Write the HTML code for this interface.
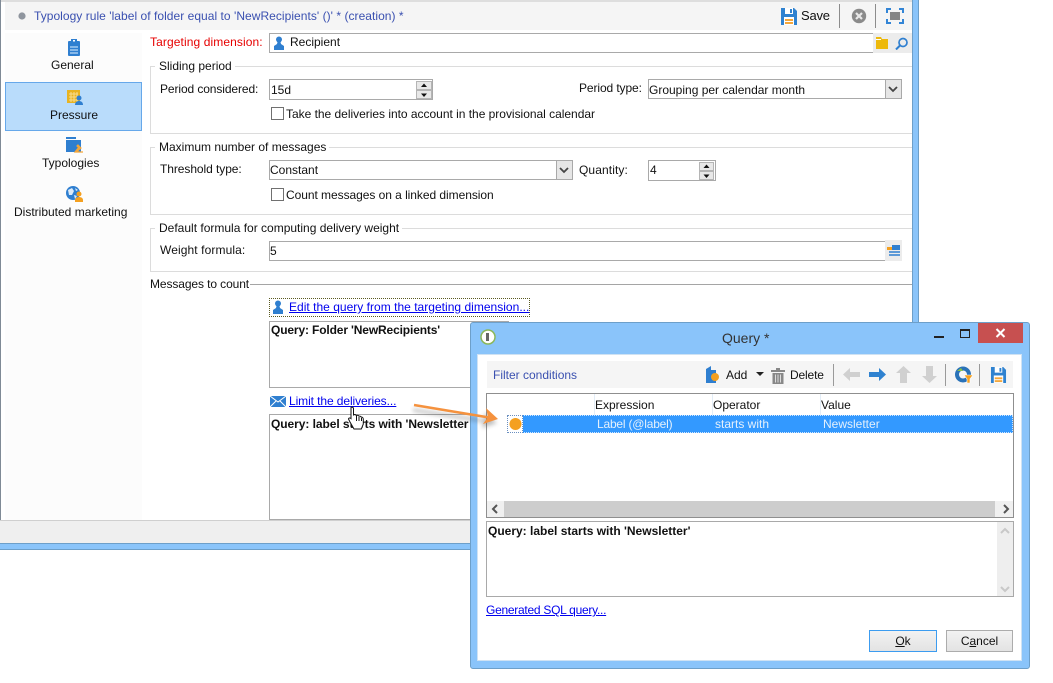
<!DOCTYPE html>
<html><head><meta charset="utf-8"><style>
html,body{margin:0;padding:0;background:#fff}
#p{position:relative;width:1053px;height:683px;overflow:hidden;background:#fff;font:12px "Liberation Sans",sans-serif;color:#111}
#p div,#p span.t,#p svg,#p a{position:absolute}
.t{white-space:nowrap;line-height:14px}
.b{border:1px solid #a9a9a9;background:#fff;box-sizing:border-box}
.fs{border:1px solid #dcdcdc;border-right:0;box-sizing:border-box}
.lg{background:#fff;padding:0 3px 0 4px;line-height:14px;white-space:nowrap}
.spin{background:#e8e8e8;border:1px solid #b5b5b5;box-sizing:border-box}
.cb{width:13px;height:13px;border:1px solid #707070;background:#fff;box-sizing:border-box}
a{color:#0000ee;text-decoration:underline;white-space:nowrap;line-height:14px}
.btn{background:linear-gradient(#f2f2f2,#e3e3e3);box-sizing:border-box;text-align:center;line-height:20px}
</style></head><body><div id="p">

<!-- main window -->
<div style="left:0;top:0;width:919px;height:550px;background:#fff"></div>
<div style="left:0;top:0;width:1px;height:520px;background:#7f8a96"></div>
<div style="left:1px;top:0;width:911px;height:2px;background:#dedede"></div>
<div style="left:5px;top:2px;width:907px;height:28px;background:#f5f5f5"></div>
<svg style="left:17px;top:11px" width="10" height="10"><circle cx="5" cy="5" r="3.600" fill="#8f959e"/></svg>
<span class="t" style="left:34px;top:9px;color:#3a50b0;letter-spacing:.04px">Typology rule 'label of folder equal to 'NewRecipients' ()' * (creation) *</span>

<svg style="left:780px;top:8px" width="18" height="17" viewBox="0 0 18 17"><path d="M1 0h13l3 3v14H1z" fill="#2f82d0"/><rect x="5" y="0" width="8" height="6" fill="#fff"/><rect x="10" y="1" width="2" height="4" fill="#2f82d0"/><rect x="4" y="9" width="10" height="8" fill="#fff"/><rect x="5" y="11" width="8" height="2" fill="#f4a63a"/><rect x="5" y="14" width="8" height="2" fill="#f4a63a"/></svg>
<span class="t" style="left:801px;top:9px;font-size:13px;letter-spacing:-.2px">Save</span>
<div style="left:839px;top:4px;width:1px;height:24px;background:#8c8c8c"></div>
<svg style="left:851px;top:8px" width="16" height="16"><circle cx="8" cy="8" r="7.200" fill="#8a8a8a"/><path d="M5 5l6 6M11 5l-6 6" stroke="#e8e8e8" stroke-width="2.200"/></svg>
<div style="left:875px;top:4px;width:1px;height:24px;background:#8c8c8c"></div>
<svg style="left:886px;top:8px" width="18" height="16"><path d="M1 5V1h4M13 1h4v4M17 11v4h-4M5 15H1v-4" fill="none" stroke="#3385d6" stroke-width="2"/><rect x="4" y="4" width="10" height="8" fill="#858585"/></svg>

<!-- sidebar -->
<div style="left:5px;top:33px;width:137px;height:487px;background:#fcfcfc"></div>
<div style="left:5px;top:82px;width:137px;height:49px;background:#b9dcfb;border:1px solid #66a8ea;box-sizing:border-box"></div>
<svg style="left:67px;top:39px" width="14" height="17"><rect x="1" y="2" width="12" height="15" rx="1" fill="#2f7fd0"/><rect x="4" y="0" width="6" height="4" fill="#2f7fd0"/><rect x="6" y="1" width="2" height="1.500" fill="#fff"/><path d="M3 8h8M3 11h8M3 14h8" stroke="#bcdaf5" stroke-width="1.200"/></svg>
<span class="t" style="left:51px;top:58px">General</span>
<svg style="left:66px;top:88px" width="18" height="18"><rect x="1" y="2" width="13" height="13" fill="#e8b321"/><path d="M3 6h9M3 9h9M3 12h9M5 4v10M8 4v10M11 4v10" stroke="#f7dc8e" stroke-width="1"/><circle cx="13" cy="10" r="2.500" fill="#2f7fd0"/><path d="M9 17c0-3 2-4 4-4s4 1 4 4z" fill="#2f7fd0"/></svg>
<span class="t" style="left:50px;top:108px">Pressure</span>
<svg style="left:66px;top:137px" width="17" height="16"><path d="M0 0h10v2H0z" fill="#2f7fd0"/><rect x="0" y="3" width="15" height="12" fill="#2f7fd0"/><path d="M9 15l4-5 1 1-3 4zM12 8l3 3-1 1-3-3zM10 15h7" stroke="#f4a63a" stroke-width="1.200" fill="#f4a63a"/></svg>
<span class="t" style="left:42px;top:156px">Typologies</span>
<svg style="left:66px;top:186px" width="17" height="16"><circle cx="7" cy="7" r="7" fill="#2f7fd0"/><path d="M2 4l4-2 2 3-2 4-3 0zM8 9l3 1-2 3zM9 2l3 2-2 1z" fill="#dcebf9"/><circle cx="13" cy="8" r="2.500" fill="#f4a020"/><path d="M9 16v-2c0-2 2-3 4-3s4 1 4 3v2z" fill="#f4a020"/></svg>
<span class="t" style="left:14px;top:205px">Distributed marketing</span>

<!-- targeting -->
<span class="t" style="left:150px;top:35px;color:#e60000;letter-spacing:.1px">Targeting dimension:</span>
<div class="b" style="left:269px;top:33px;width:605px;height:20px"></div>
<svg style="left:273px;top:36px" width="12" height="14"><circle cx="6" cy="3.500" r="3" fill="#2f7fd0"/><path d="M4.500 6h3l.5 2 3 2v4H1v-4l3-2z" fill="#2f7fd0"/></svg>
<span class="t" style="left:290px;top:35px">Recipient</span>
<div style="left:873px;top:33px;width:39px;height:20px;background:#ececec"></div>
<svg style="left:875px;top:36px" width="14" height="13"><path d="M1 1h5l1 2h6v10H1z" fill="#edb90c"/><rect x="1" y="3" width="5" height="1" fill="#fff"/></svg>
<svg style="left:895px;top:37px" width="14" height="13"><circle cx="8" cy="5.500" r="4" fill="none" stroke="#2f7fd0" stroke-width="1.700"/><path d="M5 8.500l-4 4" stroke="#2f7fd0" stroke-width="2"/></svg>

<!-- Sliding period -->
<div class="fs" style="left:150px;top:66px;width:762px;height:68px"></div>
<span class="t lg" style="left:155px;top:59px">Sliding period</span>
<span class="t" style="left:160px;top:82px;letter-spacing:-.1px">Period considered:</span>
<div class="b" style="left:269px;top:79px;width:164px;height:21px"></div>
<span class="t" style="left:271px;top:83px">15d</span>
<div class="spin" style="left:416px;top:81px;width:16px;height:9px"></div>
<div class="spin" style="left:416px;top:90px;width:16px;height:9px"></div>
<svg style="left:416px;top:81px" width="16" height="18"><path d="M5 6L8 2.500 11 6zM5 12.500h6L8 16z" fill="#111"/></svg>
<div class="cb" style="left:271px;top:107px"></div>
<span class="t" style="left:286px;top:107px;letter-spacing:-.02px">Take the deliveries into account in the provisional calendar</span>
<span class="t" style="left:579px;top:81px;letter-spacing:-.1px">Period type:</span>
<div class="b" style="left:648px;top:79px;width:254px;height:20px"></div>
<span class="t" style="left:649px;top:83px">Grouping per calendar month</span>
<div style="left:885px;top:80px;width:16px;height:18px;background:#e6e6e6;border-left:1px solid #a9a9a9;box-sizing:border-box"></div>
<svg style="left:885px;top:80px" width="16" height="18"><path d="M4 7l4 4 4-4" fill="none" stroke="#444" stroke-width="1.800"/></svg>

<!-- Max -->
<div class="fs" style="left:150px;top:147px;width:762px;height:68px"></div>
<span class="t lg" style="left:155px;top:140px">Maximum number of messages</span>
<span class="t" style="left:160px;top:162px;letter-spacing:-.07px">Threshold type:</span>
<div class="b" style="left:269px;top:160px;width:304px;height:20px"></div>
<span class="t" style="left:270px;top:163px">Constant</span>
<div style="left:556px;top:161px;width:16px;height:18px;background:#e6e6e6;border-left:1px solid #a9a9a9;box-sizing:border-box"></div>
<svg style="left:556px;top:161px" width="16" height="18"><path d="M4 7l4 4 4-4" fill="none" stroke="#444" stroke-width="1.800"/></svg>
<span class="t" style="left:579px;top:163px;letter-spacing:.1px">Quantity:</span>
<div class="b" style="left:648px;top:160px;width:68px;height:21px"></div>
<span class="t" style="left:650px;top:163px">4</span>
<div class="spin" style="left:699px;top:162px;width:15px;height:9px"></div>
<div class="spin" style="left:699px;top:171px;width:15px;height:9px"></div>
<svg style="left:699px;top:162px" width="15" height="18"><path d="M4.500 6l3-3.500 3 3.500zM4.500 12.500h6L7.500 16z" fill="#111"/></svg>
<div class="cb" style="left:271px;top:188px"></div>
<span class="t" style="left:286px;top:188px;letter-spacing:-.05px">Count messages on a linked dimension</span>

<!-- Default -->
<div class="fs" style="left:150px;top:228px;width:762px;height:44px"></div>
<span class="t lg" style="left:155px;top:221px">Default formula for computing delivery weight</span>
<span class="t" style="left:160px;top:243px;letter-spacing:.1px">Weight formula:</span>
<div class="b" style="left:269px;top:241px;width:618px;height:20px"></div>
<span class="t" style="left:270px;top:244px">5</span>
<div style="left:885px;top:240px;width:17px;height:21px;background:#ececec"></div>
<svg style="left:887px;top:245px" width="14" height="12"><rect x="0" y="2" width="5" height="3" fill="#f4a020"/><rect x="5" y="0" width="8" height="5" fill="#2f7fd0"/><path d="M2 7h11M2 10h11" stroke="#2f7fd0" stroke-width="1.500"/></svg>

<!-- Messages -->
<span class="t" style="left:150px;top:277px;letter-spacing:-.1px">Messages to count</span>
<div style="left:250px;top:284px;width:662px;height:1px;background:#a5a5a5"></div>
<div style="left:269px;top:298px;width:261px;height:19px;box-sizing:border-box;border:1px dotted #5a5a20;background:#fff"></div>
<svg style="left:272px;top:300px" width="12" height="15"><circle cx="6" cy="3.500" r="3" fill="#2f7fd0"/><path d="M4.500 6h3l.5 2 3 2v4H1v-4l3-2z" fill="#2f7fd0"/></svg>
<a style="left:289px;top:300px;letter-spacing:.02px">Edit the query from the targeting dimension...</a>
<div class="b" style="left:269px;top:321px;width:240px;height:67px"></div>
<span class="t" style="left:271px;top:323px;font-weight:bold;letter-spacing:-.14px">Query: Folder 'NewRecipients'</span>
<svg style="left:270px;top:396px" width="16" height="11"><rect width="16" height="11" fill="#2f7fd0"/><path d="M0 0l8 6 8-6M0 11l6-6M16 11l-6-6" stroke="#fff" fill="none"/></svg>
<a style="left:289px;top:394px;letter-spacing:-.09px">Limit the deliveries...</a>
<div class="b" style="left:269px;top:414px;width:240px;height:106px"></div>
<span class="t" style="left:271px;top:417px;font-weight:bold;letter-spacing:-.06px">Query: label starts with 'Newsletter</span>
<div style="left:0;top:520px;width:913px;height:1px;background:#cfcfcf"></div>
<div style="left:0;top:521px;width:913px;height:22px;background:#efefef"></div>
<div style="left:0;top:543px;width:919px;height:7px;background:#8ac4fa;border-top:1px solid #6d9fc9;border-bottom:1px solid #6d9fc9;box-sizing:border-box"></div>
<div style="left:912px;top:0;width:7px;height:550px;background:#8ac4fa;border-left:1px solid #6d9fc9;border-right:1px solid #6d9fc9;box-sizing:border-box"></div>

<!-- Cursor -->
<svg style="left:348px;top:406px;z-index:3" width="18" height="24" viewBox="0 0 18 24"><path d="M3 1.500c1-1 2.500 0 2.500 1V9l1-.5c1 0 1.500.5 2 1 1-.5 2 0 2.500.7 1-.3 2 .3 2.300 1 1-.2 2 .5 2 2V18l-2 5H6l-4-7-1.500-3c0-1 1.500-1.500 2.500-.5z" fill="#fff" stroke="#111"/><path d="M8.500 10v5M11 11v4M13.500 12v3" stroke="#111"/></svg>

<!-- Dialog -->
<div style="left:470px;top:322px;width:560px;height:347px;background:#8ac4fa;border:1px solid #6d9fc9;border-radius:3px;box-sizing:border-box;z-index:1"></div>
<div style="left:477px;top:354px;width:545px;height:307px;background:#fff;border:1px solid #cfe2f3;box-sizing:border-box;z-index:1"></div>
<div id="d" style="left:0;top:0;width:1053px;height:683px;z-index:2">
<svg style="left:480px;top:329px" width="16" height="16"><circle cx="8" cy="8" r="7" fill="#fff" stroke="#8bb75a" stroke-width="1.500"/><path d="M6 4h3v8H6z" fill="#666"/></svg>
<span class="t" style="left:722px;top:331px;font-size:14px;color:#333">Query *</span>
<div style="left:934px;top:336px;width:10px;height:2px;background:#222"></div>
<div style="left:960px;top:329px;width:10px;height:9px;border:1px solid #222;border-top-width:2px;box-sizing:border-box"></div>
<div style="left:978px;top:323px;width:45px;height:20px;background:#c75050"></div>
<svg style="left:994px;top:327px" width="13" height="12"><path d="M2.500 2l8 8M10.500 2l-8 8" stroke="#fff" stroke-width="2"/></svg>

<div style="left:487px;top:361px;width:526px;height:27px;background:#f5f5f5"></div>
<span class="t" style="left:493px;top:368px;color:#3a50b0">Filter conditions</span>
<svg style="left:706px;top:366px" width="15" height="17"><path d="M0 3l5-3v4h5v13H0z" fill="#2f7fd0"/><circle cx="9" cy="11" r="4" fill="#f4a020"/></svg>
<span class="t" style="left:726px;top:368px">Add</span>
<svg style="left:756px;top:372px" width="9" height="5"><path d="M0 0h8L4 4z" fill="#222"/></svg>
<svg style="left:771px;top:367px" width="15" height="17"><path d="M0 3h14v2H0zM5 1h4v2H5z" fill="#888"/><path d="M1.500 6h11v11h-11z" fill="#888"/><path d="M4.500 7.500v8M7 7.500v8M9.500 7.500v8" stroke="#ddd"/></svg>
<span class="t" style="left:790px;top:368px;letter-spacing:-.15px">Delete</span>
<div style="left:833px;top:364px;width:1px;height:22px;background:#9a9a9a"></div>
<svg style="left:843px;top:367px" width="17" height="15"><path d="M0 7.500L7 1v4h10v5H7v4z" fill="#d0d0d0"/></svg>
<svg style="left:869px;top:367px" width="17" height="15"><path d="M17 7.500L10 1v4H0v5h10v4z" fill="#2f82d0"/></svg>
<svg style="left:896px;top:366px" width="15" height="17"><path d="M7.500 0L15 7h-4v10H4V7H0z" fill="#d0d0d0"/></svg>
<svg style="left:922px;top:366px" width="15" height="17"><path d="M7.500 17L15 10h-4V0H4v10H0z" fill="#d0d0d0"/></svg>
<div style="left:945px;top:364px;width:1px;height:22px;background:#9a9a9a"></div>
<svg style="left:955px;top:366px" width="18" height="17"><circle cx="8" cy="8.500" r="6" fill="none" stroke="#2a72b8" stroke-width="4"/><path d="M2 5l4-3 2 3z" fill="#8ac04a"/><path d="M9 9h9l-3 4v4h-3v-4z" fill="#f4a020" stroke="#fff" stroke-width=".6"/></svg>
<div style="left:979px;top:364px;width:1px;height:22px;background:#9a9a9a"></div>
<svg style="left:990px;top:367px" width="17" height="16" viewBox="0 0 18 17"><path d="M1 0h13l3 3v14H1z" fill="#2f82d0"/><rect x="5" y="0" width="8" height="6" fill="#fff"/><rect x="10" y="1" width="2" height="4" fill="#2f82d0"/><rect x="4" y="9" width="10" height="8" fill="#fff"/><rect x="5" y="11" width="8" height="2" fill="#f4a63a"/><rect x="5" y="14" width="8" height="2" fill="#f4a63a"/></svg>

<div style="left:486px;top:393px;width:528px;height:125px;border:1px solid #8f8f8f;box-sizing:border-box;background:#fff"></div>
<div style="left:594px;top:394px;width:1px;height:21px;background:#e3edf7"></div>
<div style="left:712px;top:394px;width:1px;height:21px;background:#e3edf7"></div>
<div style="left:820px;top:394px;width:1px;height:21px;background:#e3edf7"></div>
<span class="t" style="left:595px;top:398px">Expression</span>
<span class="t" style="left:713px;top:398px">Operator</span>
<span class="t" style="left:821px;top:398px">Value</span>
<div style="left:507px;top:415px;width:506px;height:18px;background:#3399ff;outline:1px dotted #cfe6ff;outline-offset:-1px"></div>
<div style="left:507px;top:415px;width:16px;height:18px;background:#fff;border:1px dotted #6a8fc0;box-sizing:border-box"></div>
<svg style="left:508px;top:417px" width="15" height="15"><circle cx="7.500" cy="7" r="6" fill="#f4a020"/></svg>
<span class="t" style="left:597px;top:417px;color:#e4f0fc;letter-spacing:-.2px">Label (@label)</span>
<span class="t" style="left:715px;top:417px;color:#e4f0fc">starts with</span>
<span class="t" style="left:823px;top:417px;color:#e4f0fc">Newsletter</span>
<div style="left:487px;top:501px;width:526px;height:16px;background:#f0f0f0"></div>
<div style="left:504px;top:501px;width:491px;height:16px;background:#cdcdcd"></div>
<svg style="left:490px;top:504px" width="10" height="10"><path d="M7 1L3 5l4 4" fill="none" stroke="#555" stroke-width="2"/></svg>
<svg style="left:1001px;top:504px" width="10" height="10"><path d="M3 1l4 4-4 4" fill="none" stroke="#555" stroke-width="2"/></svg>

<div class="b" style="left:486px;top:521px;width:528px;height:76px"></div>
<div style="left:997px;top:522px;width:16px;height:74px;background:#eee"></div>
<svg style="left:1000px;top:527px" width="10" height="8"><path d="M1 6l4-4 4 4" fill="none" stroke="#c8c8c8" stroke-width="2"/></svg>
<svg style="left:1000px;top:585px" width="10" height="8"><path d="M1 2l4 4 4-4" fill="none" stroke="#c8c8c8" stroke-width="2"/></svg>
<span class="t" style="left:488px;top:524px;font-weight:bold">Query: label starts with 'Newsletter'</span>
<a style="left:486px;top:603px;letter-spacing:-.27px">Generated SQL query...</a>
<div class="btn" style="left:869px;top:630px;width:68px;height:22px;border:1px solid #3c9cf0"><u>O</u>k</div>
<div class="btn" style="left:946px;top:630px;width:67px;height:22px;border:1px solid #acacac">C<u>a</u>ncel</div>

<!-- arrow -->
<svg style="left:410px;top:400px" width="95" height="35"><g transform="translate(-1,4)" opacity=".35" style="filter:blur(2px)"><path d="M4 6l78 12" stroke="#444" stroke-width="3"/><path d="M76 9l12 10-15 5z" fill="#444"/></g><path d="M4 5l78 13" stroke="#f5923e" stroke-width="2.600"/><path d="M76 8l12 11-15 5 5-7z" fill="#f5923e"/></svg>
</div>
</div></body></html>
